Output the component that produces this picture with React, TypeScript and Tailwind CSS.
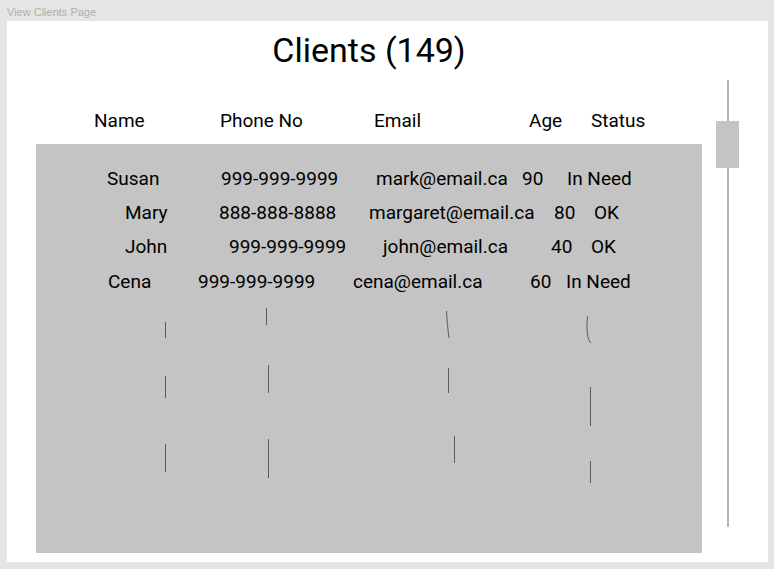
const header = [
  { label: "Name", cls: "ml-[58px] w-[126px]" },
  { label: "Phone No", cls: "w-[154px]" },
  { label: "Email", cls: "w-[155px]" },
  { label: "Age", cls: "w-[62px]" },
  { label: "Status", cls: "" },
];

// the wireframe rows are hand-placed, so every cell has its own offset
const rows = [
  {
    cls: "",
    cells: [
      { text: "Susan", cls: "ml-[71px] w-[114px]" },
      { text: "999-999-9999", cls: "w-[155px]" },
      { text: "mark@email.ca", cls: "w-[146px]" },
      { text: "90", cls: "w-[45px]" },
      { text: "In Need", cls: "" },
    ],
  },
  {
    cls: "",
    cells: [
      { text: "Mary", cls: "ml-[89px] w-[94px]" },
      { text: "888-888-8888", cls: "w-[150px]" },
      { text: "margaret@email.ca", cls: "w-[185px]" },
      { text: "80", cls: "w-[40px]" },
      { text: "OK", cls: "" },
    ],
  },
  {
    cls: "",
    cells: [
      { text: "John", cls: "ml-[89px] w-[104px]" },
      { text: "999-999-9999", cls: "w-[154px]" },
      { text: "john@email.ca", cls: "w-[168px]" },
      { text: "40", cls: "w-[40px]" },
      { text: "OK", cls: "" },
    ],
  },
  {
    cls: "mt-px",
    cells: [
      { text: "Cena", cls: "ml-[72px] w-[90px]" },
      { text: "999-999-9999", cls: "w-[155px]" },
      { text: "cena@email.ca", cls: "w-[177px]" },
      { text: "60", cls: "w-[36px]" },
      { text: "In Need", cls: "" },
    ],
  },
];

const Scribbles = () => (
  <svg
    className="absolute inset-0 pointer-events-none"
    width="666"
    height="408"
    viewBox="0 0 666 408"
    fill="none"
    stroke="#5c5c5c"
    strokeWidth="1"
  >
    <path d="M129.5 178 V194" />
    <path d="M230.5 164 V181" />
    <path d="M410.5 167 Q411 180 413 194" />
    <path d="M129.5 232 V254" />
    <path d="M232.5 221 V249" />
    <path d="M412.5 224 V249" />
    <path d="M129.5 300 V328" />
    <path d="M232.5 295 V334" />
    <path d="M418.5 292 V319" />
    <path d="M551.5 172 Q549.5 192 554.5 199" />
    <path d="M554.5 243 V282" />
    <path d="M554.5 317 V339" />
  </svg>
);

const App = () => {
  return (
    <div className="w-[774px] h-[569px] bg-[#e5e5e5] overflow-hidden font-['Roboto','Liberation_Sans',sans-serif] text-black">
      <div className="h-[21px] pl-[7px] pt-[6px] text-[11px] leading-[13px] text-[#aeaeae] font-['Liberation_Sans',sans-serif]">
        View Clients Page
      </div>
      <div className="ml-[7px] w-[761px] h-[541px] bg-white flex">
        <div className="pl-[29px] w-[695px] flex flex-col">
          <div className="h-[58px] flex items-center justify-center text-[34px] leading-[40px]">
            Clients (149)
          </div>
          <div className="mt-[30px] h-[24px] flex items-center text-[19px] leading-[24px]">
            {header.map((h) => (
              <div key={h.label} className={`shrink-0 whitespace-nowrap ${h.cls}`}>
                {h.label}
              </div>
            ))}
          </div>
          <div className="mt-[11px] w-[666px] h-[409px] bg-[#c4c4c4] relative pt-[18px]">
            {rows.map((r, i) => (
              <div
                key={i}
                className={`h-[34px] flex items-center text-[19px] leading-[24px] ${r.cls}`}
              >
                {r.cells.map((c, j) => (
                  <div key={j} className={`shrink-0 whitespace-nowrap ${c.cls}`}>
                    {c.text}
                  </div>
                ))}
              </div>
            ))}
            <Scribbles />
          </div>
        </div>
        <div className="ml-[14px] mt-[59px] h-[447px] w-[23px] relative flex justify-center">
          <div className="w-px h-full bg-[#6e6e6e] translate-x-[0.5px]" />
          <div className="absolute top-[41px] left-0 w-[23px] h-[47px] bg-[#c4c4c4]" />
        </div>
      </div>
    </div>
  );
};

export default App;
